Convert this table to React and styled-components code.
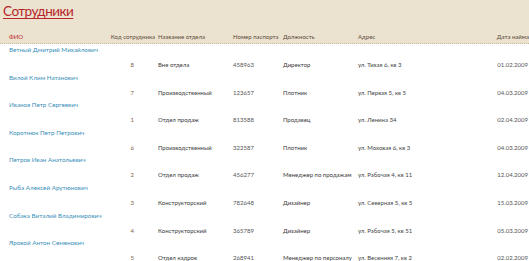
import React from "react";
import styled, { createGlobalStyle } from "styled-components";

const Global = createGlobalStyle`
  html, body { margin: 0; padding: 0; background: #ffffff; }
  body { font-family: Lato, "Open Sans", sans-serif; }
`;

const Page = styled.div`
  width: 529px;
  height: 261px;
  overflow: hidden;
  background: #ffffff;
`;

const Header = styled.div`
  background: #ebe2cf;
  height: 44px;
  box-sizing: border-box;
  border-bottom: 1px dotted #c9b99a;
  display: flex;
  flex-direction: column;
`;

const Title = styled.h1`
  margin: 0;
  padding: 3px 0 0 3px;
  font-family: Lato, sans-serif;
  font-weight: 400;
  font-size: 13.5px;
  line-height: 17px;
  color: #b8262b;
  text-decoration: underline;
  text-decoration-thickness: 1px;
  text-underline-offset: 2px;
  letter-spacing: -0.5px;
`;

const cols = "149px 75px 50px 75px 1fr auto";

const HeadRow = styled.div`
  display: grid;
  grid-template-columns: ${cols};
  padding: 0 0 0 9px;
  margin-top: 12px;
  font-size: 6px;
  line-height: 9px;
  color: #5b4a3b;
`;

const HeadCell = styled.div`
  white-space: nowrap;
  text-align: ${(p) => p.$align || "left"};
`;

const HeadPair = styled.div`
  display: flex;
  justify-content: space-between;
  padding-right: 3px;
  white-space: nowrap;
`;

const Accent = styled.span`
  color: #c0272d;
`;

const Record = styled.div`
  display: flex;
  flex-direction: column;
  height: 27.6px;
`;

const Name = styled.div`
  padding: 1px 0 0 9px;
  height: 10px;
  line-height: 10px;
  font-size: 6.3px;
  color: #3b90b8;
  white-space: nowrap;
`;

const Detail = styled.div`
  display: grid;
  grid-template-columns: ${cols};
  padding: 5px 1px 0 9px;
  line-height: 10px;
  font-size: 6px;
  color: #3a3a3a;
`;

const Cell = styled.div`
  white-space: nowrap;
  text-align: ${(p) => p.$align || "left"};
  padding-right: ${(p) => p.$pr || 0}px;
  color: ${(p) => p.$color || "inherit"};
`;

const rows = [
  ["Ветный Дмитрий Михайлович", "8", "Вне отдела", "458963", "Директор", "ул. Тихая 6, кв 3", "01.02.2009"],
  ["Вилой Клим Натанович", "7", "Производственный", "123657", "Плотник", "ул. Первая 5, кв 5", "04.03.2009"],
  ["Иванов Петр Сергеевич", "1", "Отдел продаж", "813588", "Продавец", "ул. Ленина 34", "02.04.2009"],
  ["Коротнюк Петр Петрович", "6", "Производственный", "322587", "Плотник", "ул. Моховая 6, кв 3", "04.03.2009"],
  ["Петров Иван Анатольевич", "2", "Отдел продаж", "456277", "Менеджер по продажам", "ул. Рабочая 4, кв 11", "12.04.2009"],
  ["Рыба Алексей Арутюнович", "3", "Конструкторский", "782648", "Дизайнер", "ул. Северная 5, кв 5", "15.03.2009"],
  ["Собака Виталий Владимирович", "4", "Конструкторский", "365789", "Дизайнер", "ул. Рабочая 5, кв 51", "05.03.2009"],
  ["Яровой Антон Семенович", "5", "Отдел кадров", "268941", "Менеджер по персоналу", "ул. Весенняя 7, кв 2", "02.02.2009"],
];

export default function App() {
  return (
    <Page>
      <Global />
      <Header>
        <Title>Сотрудники</Title>
        <HeadRow>
          <HeadPair>
            <Accent>ФИО</Accent>
            <span>Код сотрудника</span>
          </HeadPair>
          <HeadCell>Название отдела</HeadCell>
          <HeadCell>Номер паспорта</HeadCell>
          <HeadCell>Должность</HeadCell>
          <HeadCell>Адрес</HeadCell>
          <HeadCell $align="right">Дата найма</HeadCell>
        </HeadRow>
      </Header>
      {rows.map((r) => (
        <Record key={r[0]}>
          <Name>{r[0]}</Name>
          <Detail>
            <Cell $align="right" $pr={24} $color="#7a6446">{r[1]}</Cell>
            <Cell>{r[2]}</Cell>
            <Cell $color="#555">{r[3]}</Cell>
            <Cell>{r[4]}</Cell>
            <Cell $color="#444">{r[5]}</Cell>
            <Cell $align="right" $color="#555">{r[6]}</Cell>
          </Detail>
        </Record>
      ))}
    </Page>
  );
}
